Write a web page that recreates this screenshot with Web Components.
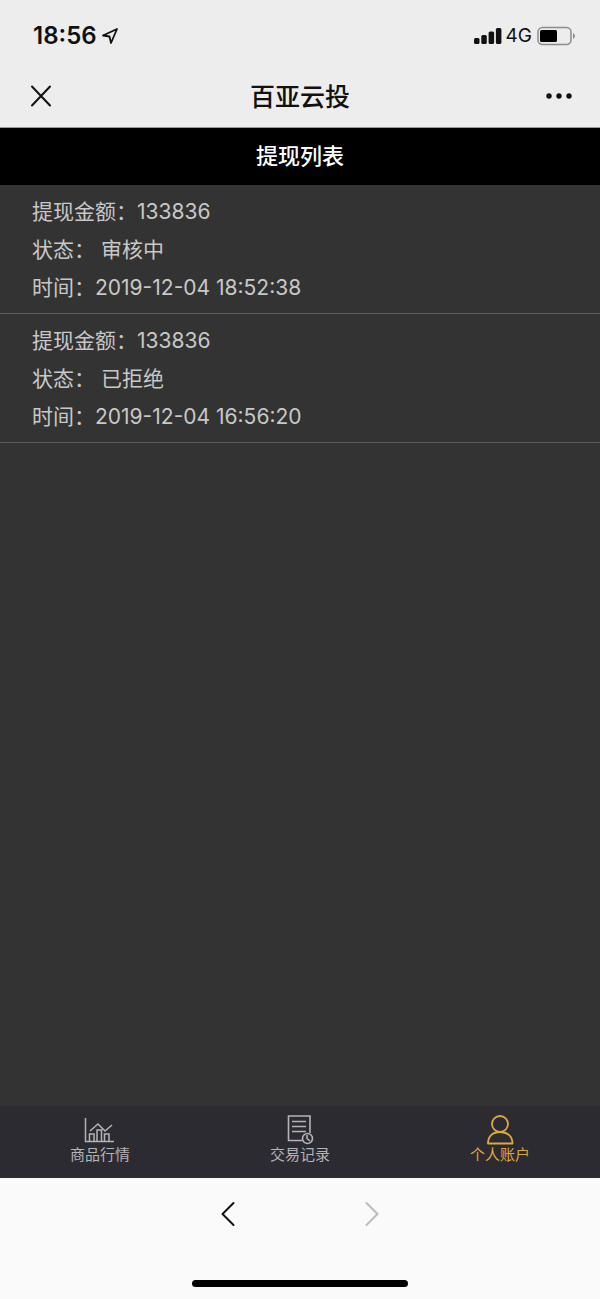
<!DOCTYPE html>
<html lang="zh-CN">
<head>
<meta charset="utf-8">
<meta name="viewport" content="width=device-width, initial-scale=1">
<title>百亚云投</title>
<style>
  html, body { margin: 0; }
  body { background: #333; font-family: Inter, "Noto Sans CJK SC", sans-serif; }
</style>
</head>
<body>
<app-screen>
  <status-bar slot="top" time="18:56" network="4G"></status-bar>
  <nav-bar slot="top">百亚云投</nav-bar>
  <page-heading>提现列表</page-heading>
  <withdraw-record amount="133836" status="审核中" time="2019-12-04 18:52:38"></withdraw-record>
  <withdraw-record amount="133836" status="已拒绝" time="2019-12-04 16:56:20"></withdraw-record>
  <tab-bar slot="bottom">
    <tab-item>
      <svg slot="icon" width="32" height="32" viewBox="0 0 32 32" fill="none" stroke="currentColor" stroke-width="1.500"><path d="M1.500 4V27.500H30M5.500 27V20H10V27M13 27V16H17.500V27M20.500 27V20H25V27M6 17L14 10L21 17L28 11"/></svg>
      商品行情
    </tab-item>
    <tab-item>
      <svg slot="icon" width="32" height="32" viewBox="0 0 32 32" fill="none" stroke="currentColor" stroke-width="1.600"><path d="M26 19V2H4.500V26.500H18M8 7.500H22M8 12.500H22M8 17.500H22"/><circle cx="23.500" cy="24.500" r="5"/><path d="M23 21V24.500L26 27"/></svg>
      交易记录
    </tab-item>
    <tab-item current>
      <svg slot="icon" width="32" height="32" viewBox="0 0 32 32" fill="none" stroke="currentColor" stroke-width="1.800"><circle cx="16" cy="10" r="8"/><path d="M4 29.500C4 22 9 18 16 18S28.500 22 28.500 29.500Z" stroke-linejoin="round"/></svg>
      个人账户
    </tab-item>
  </tab-bar>
  <browser-bar slot="bottom"></browser-bar>
</app-screen>

<script>
const define = (name, html, setup) => {
  const template = document.createElement('template');
  template.innerHTML = html;
  customElements.define(name, class extends HTMLElement {
    constructor() {
      super();
      this.attachShadow({ mode: 'open' }).append(template.content.cloneNode(true));
    }
    connectedCallback() { if (setup) setup(this, this.shadowRoot); }
  });
};
const fill = (host, root) => root.querySelectorAll('[data-from]').forEach(el => {
  el.textContent = host.getAttribute(el.dataset.from);
});

define('app-screen', `
  <style>
    :host { display: flex; flex-direction: column; min-height: 100vh; background: #333; }
    header { background: #ededed; border-bottom: 1px solid #999; }
    main { flex: 1; }
  </style>
  <header><slot name="top"></slot></header>
  <main><slot></slot></main>
  <footer><slot name="bottom"></slot></footer>`);

define('status-bar', `
  <style>
    :host { display: flex; justify-content: space-between; align-items: center; height: 56px; padding: 8px 24px 0 33px; color: #111; }
    div { display: flex; align-items: center; gap: 4px; }
    time { font-size: 24px; line-height: 28px; font-weight: 600; }
    .network { font-size: 19px; line-height: 24px; }
    svg { display: block; }
  </style>
  <div>
    <time data-from="time"></time>
    <svg width="18" height="18" viewBox="0 0 18 18" fill="none" stroke="currentColor" stroke-width="1.800" stroke-linejoin="round"><path d="M16 2L2 8.500L8.500 9.500L10 16Z"/></svg>
  </div>
  <div>
    <svg width="28" height="18" viewBox="0 0 28 18" fill="currentColor"><rect y="11" width="5.500" height="6" rx="1.500"/><rect x="7.300" y="8" width="5.500" height="9" rx="1.500"/><rect x="14.600" y="4.500" width="5.500" height="12.500" rx="1.500"/><rect x="21.900" y="1" width="5.500" height="16" rx="1.500"/></svg>
    <span class="network" data-from="network"></span>
    <svg width="40" height="20" viewBox="0 0 40 20"><rect x="2" y="1.500" width="33" height="17" rx="4.500" fill="none" stroke="#8c8c8c" stroke-width="1.500"/><rect x="4" y="4" width="17" height="12" rx="1.500"/><path d="M37 7Q41 10 37 13Z" fill="#8c8c8c"/></svg>
  </div>`, fill);

define('nav-bar', `
  <style>
    :host { display: grid; grid-template-columns: 48px 1fr 48px; align-items: center; height: 63px; padding: 0 17px; color: #111; }
    h1 { margin: 0; padding-top: 2px; text-align: center; font-size: 25px; line-height: 36px; font-weight: 500; }
    button { display: grid; place-items: center; width: 48px; height: 48px; padding: 0; border: 0; background: none; color: inherit; }
  </style>
  <button type="button" aria-label="关闭"><svg width="48" height="24" viewBox="0 0 48 24" fill="none" stroke="currentColor" stroke-width="2" stroke-linecap="round"><path d="M15 2.500L33 21.500M33 2.500L15 21.500"/></svg></button>
  <h1><slot></slot></h1>
  <button type="button" aria-label="更多"><svg width="48" height="24" viewBox="0 0 48 24" fill="currentColor"><circle cx="14" cy="12" r="2.700"/><circle cx="24" cy="12" r="2.700"/><circle cx="34" cy="12" r="2.700"/></svg></button>`);

define('page-heading', `
  <style>
    :host { display: block; background: #000; color: #fff; }
    h2 { margin: 0; padding: 12px 0; text-align: center; font-size: 22px; line-height: 33px; font-weight: 500; }
  </style>
  <h2><slot></slot></h2>`);

define('withdraw-record', `
  <style>
    :host { display: block; padding: 8px 32px 6px; border-bottom: 1px solid #5c5c5c; color: #c8c8c8; font-size: 21px; }
    p { margin: 0; line-height: 38px; white-space: pre; }
  </style>
  <p>提现金额：<span data-from="amount"></span></p>
  <p>状态： <span data-from="status"></span></p>
  <p>时间：<time data-from="time"></time></p>`, fill);

define('tab-bar', `
  <style>
    :host { display: block; background: #2c2b31; }
    nav { display: grid; grid-template-columns: repeat(3, 1fr); }
  </style>
  <nav aria-label="主导航"><slot></slot></nav>`);

define('tab-item', `
  <style>
    :host { display: block; color: #b4b4b8; }
    :host([current]) { color: #dba93f; }
    a { display: flex; flex-direction: column; align-items: center; padding: 8px 0 14px; color: inherit; text-decoration: none; font-size: 15px; line-height: 18px; }
    ::slotted(svg) { display: block; }
  </style>
  <a href="#"><slot name="icon"></slot><span><slot></slot></span></a>`);

define('browser-bar', `
  <style>
    :host { display: flex; flex-direction: column; align-items: center; justify-content: space-between; height: 97px; padding: 12px 0; background: #fafafa; }
    nav { display: flex; gap: 96px; }
    button { width: 48px; height: 48px; padding: 0; border: 0; background: none; color: #111; display: grid; place-items: center; }
    button:disabled { color: #bbb; }
    .home { width: 36%; height: 7px; border-radius: 4px; background: #000; }
    svg { fill: none; stroke: currentColor; stroke-width: 2; stroke-linecap: round; stroke-linejoin: round; }
  </style>
  <nav aria-label="浏览历史">
    <button type="button" aria-label="后退"><svg width="24" height="28" viewBox="0 0 24 28"><path d="M17.500 3L6.500 14L17.500 25"/></svg></button>
    <button type="button" aria-label="前进" disabled><svg width="24" height="28" viewBox="0 0 24 28"><path d="M6.500 3L17.500 14L6.500 25"/></svg></button>
  </nav>
  <div class="home"></div>`);
</script>
</body>
</html>
